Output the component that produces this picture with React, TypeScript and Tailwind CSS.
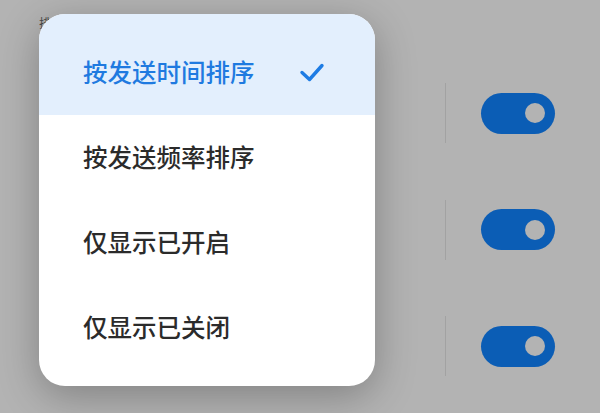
import { useState } from "react";

const options = ["按发送时间排序", "按发送频率排序", "仅显示已开启", "仅显示已关闭"];

function Toggle() {
  return (
    <div className="flex items-center justify-end w-[74px] h-[41px] rounded-full bg-[#0b5db5] pr-[10px]">
      <div className="w-[20px] h-[20px] rounded-full bg-[#b3b3b3]" />
    </div>
  );
}

function Check() {
  return (
    <svg width="26" height="22" viewBox="0 0 26 22" fill="none">
      <path
        d="M3 10.5 L10.5 17.5 L23 3.5"
        stroke="#1e7ce4"
        strokeWidth="3.4"
        strokeLinecap="round"
        strokeLinejoin="round"
      />
    </svg>
  );
}

export default function App() {
  const [selected, setSelected] = useState(0);

  return (
    <div
      className="relative w-[600px] h-[413px] overflow-hidden bg-[#b3b3b3]"
      style={{ fontFamily: '"Noto Sans CJK SC", "Noto Sans", sans-serif' }}
    >
      {/* page behind the dimmed overlay */}
      <div className="flex flex-col pt-[55px]">
        <div className="absolute left-[39px] top-[17px] text-[12px] leading-none text-[#4a4a4a]">
          排序
        </div>
        {[0, 1, 2].map((i) => (
          <div key={i} className="flex items-center h-[116.5px] pl-[445px]">
            <div className="w-px h-[60px] bg-[#a2a2a2]" />
            <div className="ml-[35px]">
              <Toggle />
            </div>
          </div>
        ))}
      </div>

      {/* sort menu */}
      <div className="absolute left-[39px] top-[14px] w-[336px] rounded-[26px] bg-white overflow-hidden shadow-[0_10px_40px_rgba(0,0,0,0.28)]">
        {options.map((opt, i) => (
          <div
            key={opt}
            onClick={() => setSelected(i)}
            className={`flex items-center justify-between pl-[44px] pr-[50px] ${
              i === 0 ? "h-[101px] pt-[16px]" : "h-[85px]"
            } ${i === options.length - 1 ? "mb-[16px]" : ""} ${
              selected === i ? "bg-[#e3effd] text-[#1f7ae0]" : "text-[#2b2b2b]"
            }`}
          >
            <span className="text-[24.5px] leading-none font-medium">{opt}</span>
            {selected === i && <Check />}
          </div>
        ))}
      </div>
    </div>
  );
}
